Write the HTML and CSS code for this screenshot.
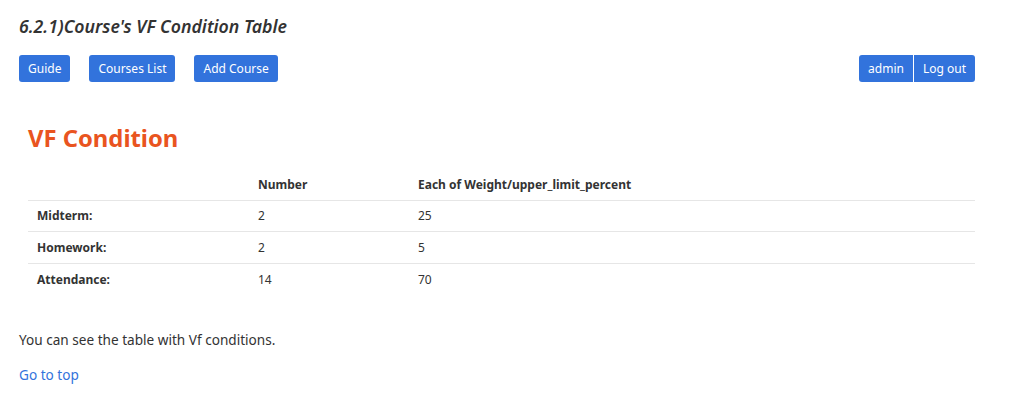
FILE: index.html
```html
<!DOCTYPE html>
<html>
<head>
<meta charset="utf-8">
<link rel="stylesheet" href="styles.css">
</head>
<body>
<div class="page">
  <h3 class="title">6.2.1)Course's VF Condition Table</h3>
  <div class="toolbar">
    <div class="left-group">
      <a class="btn" href="#">Guide</a>
      <a class="btn" href="#">Courses List</a>
      <a class="btn" href="#">Add Course</a>
    </div>
    <div class="right-group">
      <a class="btn join-left" href="#">admin</a>
      <a class="btn join-right" href="#">Log out</a>
    </div>
  </div>
  <div class="section">
    <h2 class="section-title">VF Condition</h2>
    <table class="vf-table">
      <colgroup>
        <col class="c1"><col class="c2"><col class="c3">
      </colgroup>
      <thead>
        <tr><th></th><th>Number</th><th>Each of Weight/upper_limit_percent</th></tr>
      </thead>
      <tbody>
        <tr><th>Midterm:</th><td>2</td><td>25</td></tr>
        <tr><th>Homework:</th><td>2</td><td>5</td></tr>
        <tr><th>Attendance:</th><td>14</td><td>70</td></tr>
      </tbody>
    </table>
  </div>
  <p class="note">You can see the table with Vf conditions.</p>
  <a class="top-link" href="#">Go to top</a>
</div>
</body>
</html>
```

FILE: styles.css
```css
html, body {
  margin: 0;
  padding: 0;
  background: #ffffff;
}
body {
  font-family: "Noto Sans", "Open Sans", sans-serif;
  color: #333333;
}
.page {
  padding: 0 34px 0 19px;
}
.title {
  margin: 0;
  padding-top: 14px;
  font-size: 17.7px;
  font-style: italic;
  font-weight: 600;
  line-height: 24px;
  color: #333333;
}
.toolbar {
  display: flex;
  justify-content: space-between;
  align-items: center;
  margin-top: 17px;
}
.left-group {
  display: flex;
  gap: 19px;
}
.right-group {
  display: flex;
  gap: 1px;
}
.btn {
  display: inline-block;
  background: #3273dc;
  color: #ffffff;
  text-decoration: none;
  font-size: 12px;
  line-height: 27px;
  height: 27px;
  padding: 0 9px;
  border-radius: 3px;
}
.join-left {
  border-top-right-radius: 0;
  border-bottom-right-radius: 0;
}
.join-right {
  border-top-left-radius: 0;
  border-bottom-left-radius: 0;
}
.section {
  padding-left: 9px;
  margin-top: 40px;
}
.section-title {
  margin: 0;
  font-size: 23.8px;
  font-weight: 700;
  line-height: 32px;
  color: #e95420;
}
.vf-table {
  width: 100%;
  border-collapse: collapse;
  margin-top: 15px;
  font-size: 12px;
  color: #333333;
}
.c1 { width: 221px; }
.c2 { width: 160px; }
.vf-table th,
.vf-table td {
  text-align: left;
  padding: 0 9px;
  height: 31.5px;
  box-sizing: border-box;
}
.vf-table th {
  font-weight: 700;
}
.vf-table thead th {
  height: 31px;
}
.vf-table tbody tr {
  border-top: 1px solid #e6e6e6;
}
.note {
  margin: 35px 0 0;
  font-size: 13.6px;
  line-height: 20px;
  color: #333333;
}
.top-link {
  display: inline-block;
  margin-top: 15px;
  font-size: 13.6px;
  line-height: 20px;
  color: #3273dc;
  text-decoration: none;
}
```
